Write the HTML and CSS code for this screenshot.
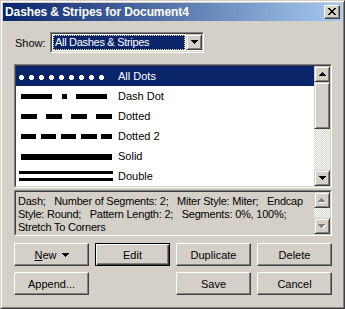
FILE: index.html
```html
<!DOCTYPE html>
<html>
<head>
<meta charset="utf-8">
<link rel="stylesheet" href="styles.css">
</head>
<body>
<div class="window">
  <div class="titlebar">
    <span class="title">Dashes &amp; Stripes for Document4</span>
    <div class="close">
      <svg width="8" height="7" viewBox="0 0 8 7" shape-rendering="crispEdges"><path d="M0 0h2v1h-2zM6 0h2v1h-2zM1 1h2v1h-2zM5 1h2v1h-2zM2 2h4v1h-4zM3 3h2v1h-2zM2 4h4v1h-4zM1 5h2v1h-2zM5 5h2v1h-2zM0 6h2v1h-2zM6 6h2v1h-2z" fill="#000"/></svg>
    </div>
  </div>
  <div class="body">
    <div class="show-row">
      <span class="label">Show:</span>
      <div class="combo">
        <div class="combo-inner">
          <div class="combo-value">All Dashes &amp; Stripes</div>
          <div class="sb-btn combo-btn"><svg class="arrow" width="7" height="4" viewBox="0 0 7 4" shape-rendering="crispEdges"><path d="M0 0h7v1h-7zM1 1h5v1h-5zM2 2h3v1h-3zM3 3h1v1h-1z" fill="#000"/></svg></div>
        </div>
      </div>
    </div>

    <div class="field listbox">
      <div class="field-inner list-inner">
        <ul class="items">
          <li class="item selected">
            <svg class="pat" width="100" height="20" viewBox="0 0 100 20" shape-rendering="crispEdges" fill="#fff">
              <path d="M4 9h3v5h-3zM3 10h5v3h-5zM14 9h3v5h-3zM13 10h5v3h-5zM24 9h3v5h-3zM23 10h5v3h-5zM34 9h3v5h-3zM33 10h5v3h-5zM44 9h3v5h-3zM43 10h5v3h-5zM54 9h3v5h-3zM53 10h5v3h-5zM64 9h3v5h-3zM63 10h5v3h-5zM74 9h3v5h-3zM73 10h5v3h-5zM84 9h3v5h-3zM83 10h5v3h-5z"/>
            </svg>
            <span>All Dots</span>
          </li>
          <li class="item">
            <svg class="pat" width="100" height="20" viewBox="0 0 100 20" shape-rendering="crispEdges" fill="#000">
              <path d="M5 8h31v5h-31zM46 8h5v5h-5zM60 8h31v5h-31z"/>
            </svg>
            <span>Dash Dot</span>
          </li>
          <li class="item">
            <svg class="pat" width="100" height="20" viewBox="0 0 100 20" shape-rendering="crispEdges" fill="#000">
              <path d="M5 8h16v5h-16zM30 8h16v5h-16zM55 8h16v5h-16zM80 8h16v5h-16z"/>
            </svg>
            <span>Dotted</span>
          </li>
          <li class="item">
            <svg class="pat" width="100" height="20" viewBox="0 0 100 20" shape-rendering="crispEdges" fill="#000">
              <path d="M5 8h15v5h-15zM25 8h15v5h-15zM45 8h15v5h-15zM65 8h16v5h-16zM85 8h11v5h-11z"/>
            </svg>
            <span>Dotted 2</span>
          </li>
          <li class="item">
            <svg class="pat" width="100" height="20" viewBox="0 0 100 20" shape-rendering="crispEdges" fill="#000">
              <path d="M5 8h91v6h-91z"/>
            </svg>
            <span>Solid</span>
          </li>
          <li class="item">
            <svg class="pat" width="100" height="20" viewBox="0 0 100 20" shape-rendering="crispEdges" fill="#000">
              <path d="M3 5h94v3h-94zM3 12h94v3h-94z"/>
            </svg>
            <span>Double</span>
          </li>
        </ul>
        <div class="vscroll">
          <div class="sb-btn"><svg class="arrow" width="7" height="4" viewBox="0 0 7 4" shape-rendering="crispEdges"><path d="M3 0h1v1h-1zM2 1h3v1h-3zM1 2h5v1h-5zM0 3h7v1h-7z" fill="#000"/></svg></div>
          <div class="sb-btn thumb"></div>
          <div class="track"></div>
          <div class="sb-btn"><svg class="arrow" width="7" height="4" viewBox="0 0 7 4" shape-rendering="crispEdges"><path d="M0 0h7v1h-7zM1 1h5v1h-5zM2 2h3v1h-3zM3 3h1v1h-1z" fill="#000"/></svg></div>
        </div>
      </div>
    </div>

    <div class="field desc">
      <div class="field-inner desc-inner">
        <div class="desc-text"><div>Dash;   Number of Segments: 2;   Miter Style: Miter;   Endcap</div><div>Style: Round;   Pattern Length: 2;   Segments: 0%, 100%;</div><div>Stretch To Corners</div></div>
        <div class="vscroll small">
          <div class="sb-btn"><svg class="arrow" width="8" height="5" viewBox="0 0 8 5" shape-rendering="crispEdges"><path d="M4 1h1v1h-1zM3 2h3v1h-3zM2 3h5v1h-5zM1 4h7v1h-7z" fill="#fff"/><path d="M3 0h1v1h-1zM2 1h3v1h-3zM1 2h5v1h-5zM0 3h7v1h-7z" fill="#808080"/></svg></div>
          <div class="track"></div>
          <div class="sb-btn"><svg class="arrow" width="8" height="5" viewBox="0 0 8 5" shape-rendering="crispEdges"><path d="M1 1h7v1h-7zM2 2h5v1h-5zM3 3h3v1h-3zM4 4h1v1h-1z" fill="#fff"/><path d="M0 0h7v1h-7zM1 1h5v1h-5zM2 2h3v1h-3zM3 3h1v1h-1z" fill="#808080"/></svg></div>
        </div>
      </div>
    </div>

    <div class="buttons">
      <div class="btn"><span><u>N</u>ew</span><svg class="new-arrow" width="7" height="4" viewBox="0 0 7 4" shape-rendering="crispEdges"><path d="M0 0h7v1h-7zM1 1h5v1h-5zM2 2h3v1h-3zM3 3h1v1h-1z" fill="#000"/></svg></div>
      <div class="btn default">Edit</div>
      <div class="btn">Duplicate</div>
      <div class="btn">Delete</div>
      <div class="btn">Append...</div>
      <div class="spacer"></div>
      <div class="btn">Save</div>
      <div class="btn">Cancel</div>
    </div>
  </div>
</div>
</body>
</html>
```

FILE: styles.css
```css
* { box-sizing: border-box; }
html, body { margin: 0; padding: 0; }
body {
  font-family: "Liberation Sans", Arial, sans-serif;
  font-size: 11px;
  color: #000;
  background: #D4D0C8;
}
.window {
  width: 345px;
  height: 309px;
  background: #D4D0C8;
  border: 1px solid;
  border-color: #D4D0C8 #404040 #404040 #D4D0C8;
  box-shadow: inset 1px 1px #fff, inset -1px -1px #808080;
  padding: 2px;
  display: flex;
  flex-direction: column;
}
.titlebar {
  height: 18px;
  background: linear-gradient(to right, #0A246A, #A6CAF0);
  display: flex;
  align-items: center;
  justify-content: space-between;
  padding: 0 2px 0 2px;
}
.title {
  color: #fff;
  font-weight: bold;
  font-size: 12px;
  letter-spacing: -0.1px;
  white-space: nowrap;
}
.close {
  width: 16px;
  height: 14px;
  background: #D4D0C8;
  border: 1px solid;
  border-color: #fff #404040 #404040 #fff;
  box-shadow: inset -1px -1px #808080;
  display: flex;
  align-items: center;
  justify-content: center;
  padding: 0 1px 1px 0;
}
.close svg { display: block; }
.body {
  padding: 11px 10px 0 11px;
  display: flex;
  flex-direction: column;
}
.show-row {
  height: 21px;
  display: flex;
  align-items: center;
}
.label {
  width: 36px;
  padding-left: 1px;
}
.combo {
  width: 154px;
  height: 21px;
  border: 1px solid;
  border-color: #808080 #fff #fff #808080;
}
.combo-inner {
  height: 100%;
  border: 1px solid;
  border-color: #404040 #D4D0C8 #D4D0C8 #404040;
  background: #fff;
  display: flex;
}
.combo-value {
  flex: 1;
  margin: 1px;
  background: #0A246A;
  color: #fff;
  border: 1px dotted #E8DC8C;
  padding-left: 1px;
  line-height: 13px;
  letter-spacing: -0.3px;
  white-space: nowrap;
  overflow: hidden;
}
.combo-btn {
  width: 16px;
  height: 17px;
}
.sb-btn {
  width: 16px;
  height: 16px;
  background: #D4D0C8;
  border: 1px solid;
  border-color: #D4D0C8 #404040 #404040 #D4D0C8;
  box-shadow: inset 1px 1px #fff, inset -1px -1px #808080;
  display: flex;
  align-items: center;
  justify-content: center;
  flex: none;
}
.arrow { display: block; }
.field {
  border: 1px solid;
  border-color: #808080 #fff #fff #808080;
}
.field-inner {
  height: 100%;
  border: 1px solid;
  border-color: #404040 #D4D0C8 #D4D0C8 #404040;
  display: flex;
}
.listbox {
  margin-top: 11px;
  height: 124px;
}
.list-inner { background: #fff; }
.items {
  list-style: none;
  margin: 0;
  padding: 0;
  flex: 1;
}
.item {
  height: 20px;
  display: flex;
  align-items: center;
  white-space: nowrap;
}
.item.selected {
  background: #0A246A;
  color: #fff;
}
.pat { display: block; flex: none; margin-right: 2px; }
.vscroll {
  width: 16px;
  display: flex;
  flex-direction: column;
}
.thumb { height: 47px; }
.track {
  flex: 1;
  background: repeating-conic-gradient(#fff 0 25%, #D4D0C8 0 50%) 0 0 / 2px 2px;
}
.desc {
  margin-top: 2px;
  height: 46px;
}
.desc-inner { background: #D4D0C8; }
.desc-text {
  flex: 1;
  padding: 3px 0 0 2px;
  line-height: 13px;
  letter-spacing: -0.22px;
  white-space: pre;
  overflow: hidden;
}
.buttons {
  margin-top: 7px;
  display: grid;
  grid-template-columns: repeat(4, 75px);
  grid-auto-rows: 23px;
  column-gap: 6px;
  row-gap: 6px;
}
.btn {
  background: #D4D0C8;
  border: 1px solid;
  border-color: #fff #404040 #404040 #fff;
  box-shadow: inset -1px -1px #808080, inset 1px 1px #D4D0C8;
  display: flex;
  align-items: center;
  justify-content: center;
  gap: 5px;
  white-space: nowrap;
}
.btn.default {
  border: 1px solid #000;
  box-shadow: inset 1px 1px #fff, inset -1px -1px #404040, inset -2px -2px #808080;
}
.new-arrow { display: block; margin-top: 1px; }
u { text-decoration: underline; text-underline-offset: 1px; }
```
